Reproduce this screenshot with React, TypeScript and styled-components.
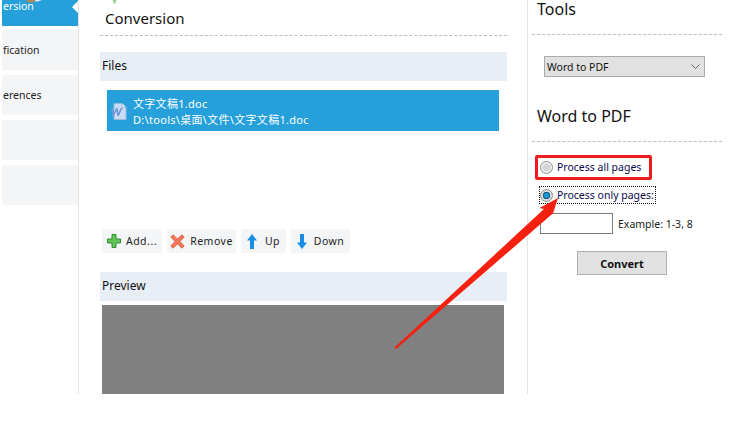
import React from "react";
import styled, { createGlobalStyle } from "styled-components";

const Global = createGlobalStyle`
  html, body { margin: 0; padding: 0; background: #fff; }
  body { font-family: "Noto Sans", "Noto Sans CJK SC", sans-serif; color: #111; }
`;

const Page = styled.div`
  position: relative;
  width: 729px;
  height: 432px;
  overflow: hidden;
  background: #fff;
`;
const Shell = styled.div`
  display: flex;
  height: 394px;
`;
const Sidebar = styled.nav`
  width: 76px;
  padding-left: 2px;
  border-right: 1px solid #e3e3e3;
  display: flex;
  flex-direction: column;
  gap: 5px;
`;
const NavItem = styled.div<{ $active?: boolean }>`
  position: relative;
  height: ${(p) => (p.$active ? 26 : 40)}px;
  margin-bottom: ${(p) => (p.$active ? -1 : 0)}px;
  background: ${(p) => (p.$active ? "#26a0da" : "#f4f5f7")};
  color: ${(p) => (p.$active ? "#fff" : "#222")};
  font-size: 10.5px;
  line-height: ${(p) => (p.$active ? 12 : 40)}px;
  padding-left: 1px;
  white-space: nowrap;
`;
const Notch = styled.i`
  position: absolute;
  right: 0;
  top: 1px;
  border: 6px solid transparent;
  border-right-color: #fff;
  border-left-width: 0;
`;
const Main = styled.main`
  width: 449px;
  padding: 0 20px 0 21px;
  box-sizing: border-box;
  border-right: 1px solid #e3e3e3;
  display: flex;
  flex-direction: column;
`;
const Title = styled.h2<{ $size?: number; $top?: number; $lh?: number }>`
  margin: ${(p) => p.$top ?? 0}px 0 0;
  font-weight: 400;
  font-size: ${(p) => p.$size ?? 15}px;
  line-height: ${(p) => p.$lh ?? 20}px;
  padding-left: 5px;
  color: #111;
`;
const Dash = styled.div<{ $top?: number; $bottom?: number; $w?: number }>`
  border-top: 1px dashed #bdbdbd;
  margin: ${(p) => p.$top ?? 0}px 0 ${(p) => p.$bottom ?? 0}px;
  width: ${(p) => (p.$w ? `${p.$w}px` : "auto")};
`;
const Band = styled.div`
  height: 29px;
  width: 407px;
  line-height: 28px;
  padding-left: 2px;
  box-sizing: border-box;
  background: #e8eef6;
  font-size: 12px;
`;
const FileRow = styled.div`
  margin: 9px 0 0 7px;
  width: 392px;
  height: 41px;
  box-sizing: border-box;
  background: #26a0da;
  color: #fff;
  display: flex;
  align-items: center;
  gap: 6px;
  padding: 2px 0 0 3px;
  font-size: 11px;
  line-height: 16px;
  letter-spacing: 0.3px;
`;
const FileText = styled.div`
  display: flex;
  flex-direction: column;
`;
const Toolbar = styled.div`
  display: flex;
  gap: 5px;
  margin: 98px 0 19px 2px;
`;
const ToolButton = styled.button<{ $w: number; $gap: number }>`
  width: ${(p) => p.$w}px;
  height: 24px;
  border: 0;
  padding: 0;
  background: #f4f5f7;
  display: flex;
  align-items: center;
  justify-content: center;
  gap: ${(p) => p.$gap}px;
  font: inherit;
  font-size: 10.5px;
  color: #222;
  letter-spacing: 0.5px;
`;
const Canvas = styled.div`
  margin: 4px 0 0 2px;
  width: 402px;
  flex: 1;
  background: #808080;
`;
const Aside = styled.aside`
  flex: 1;
  padding-left: 4px;
  display: flex;
  flex-direction: column;
`;
const Select = styled.div`
  margin: 21px 0 0 12px;
  width: 161px;
  height: 21px;
  box-sizing: border-box;
  border: 1px solid #aaa;
  background: #e1e1e1;
  display: flex;
  align-items: center;
  justify-content: space-between;
  padding: 0 4px 0 2px;
  font-size: 10.5px;
  color: #111;
`;
const RadioRow = styled.label<{ $focus?: boolean; $top?: number }>`
  display: flex;
  align-items: center;
  gap: 4px;
  font-size: 10.5px;
  color: #0a0a50;
  width: 115px;
  height: 16px;
  margin: ${(p) => p.$top ?? 0}px 0 0 8px;
  box-sizing: border-box;
  outline: ${(p) => (p.$focus ? "1px dotted #111" : "none")};
`;
const Radio = styled.span<{ $on?: boolean }>`
  width: 13px;
  height: 13px;
  border-radius: 50%;
  box-sizing: border-box;
  flex: none;
  border: 1px solid #8f8f8f;
  background: ${(p) =>
    p.$on
      ? "radial-gradient(circle, #1a9ad6 0 2px, #0c4f80 3.4px, #dcdcdc 4px)"
      : "radial-gradient(circle, #d4d4d4 0 3px, #f2f2f2 5px)"};
`;
const PageRange = styled.div`
  display: flex;
  align-items: center;
  gap: 5px;
  margin: 10px 0 0 8px;
  font-size: 10.5px;
  color: #222;
`;
const PageInput = styled.div`
  width: 73px;
  height: 21px;
  box-sizing: border-box;
  border: 1px solid #7a7a7a;
  background: #fff;
`;
const Convert = styled.button`
  margin: 17px 0 0 45px;
  width: 90px;
  height: 24px;
  box-sizing: border-box;
  border: 1px solid #b0b0b0;
  background: #e1e1e1;
  font: inherit;
  font-size: 11px;
  font-weight: 700;
  color: #111;
`;
const Highlight = styled.div`
  position: absolute;
  left: 535px;
  top: 155px;
  width: 117px;
  height: 25px;
  box-sizing: border-box;
  border: 3px solid #ee1c1c;
  border-radius: 2px;
`;
const Overlay = styled.svg`
  position: absolute;
  left: 0;
  top: 0;
  pointer-events: none;
`;
const Icon = styled.svg`
  flex: none;
  display: block;
`;

const WordIcon = () => (
  <Icon width="17" height="17" viewBox="0 0 17 17">
    <path d="M4 .5h8l4 4v12H4z" fill="#c9dcf4" stroke="#9db8de" />
    <path d="M12 .5v4h4" fill="#eef4fb" stroke="#9db8de" />
    <path d="M1 5l1.200 8h1.600L6.500 8l.8 5h1.600L12.500 5h-1.700l-2.400 5L7.700 5H6.300l-2.500 5L3 5z" fill="#6f96d4" />
  </Icon>
);
const Plus = () => (
  <Icon width="14" height="14" viewBox="0 0 14 14">
    <path d="M5 .5h4v4.500h4.500v4H9v4.500H5V9H.5V5H5z" fill="#63c45a" stroke="#2f8f2f" />
  </Icon>
);
const Cross = () => (
  <Icon width="15" height="15" viewBox="0 0 15 15">
    <path d="M3 .8l4.500 4.200L12 .8l2.200 2.200-4.300 4.500 4.300 4.500-2.200 2.200-4.500-4.300L3 14.200.8 12l4.300-4.500L.8 3z" fill="#f2775a" stroke="#d9512f" strokeWidth=".8" />
  </Icon>
);
const Up = () => (
  <Icon width="10" height="15" viewBox="0 0 10 15">
    <path d="M5 0L10 6.500H7V15H3V6.500H0z" fill="#1a8ee6" />
  </Icon>
);
const Down = () => (
  <Icon width="10" height="15" viewBox="0 0 10 15">
    <path d="M5 15L10 8.500H7V0H3V8.500H0z" fill="#1a8ee6" />
  </Icon>
);

export default function App() {
  return (
    <Page>
      <Global />
      <Shell>
        <Sidebar>
          <NavItem $active>
            ersion
            <Notch />
          </NavItem>
          <NavItem>fication</NavItem>
          <NavItem>erences</NavItem>
          <NavItem />
          <NavItem />
        </Sidebar>
        <Main>
          <Title $top={8}>Conversion</Title>
          <Dash $top={7} $bottom={16} />
          <Band>Files</Band>
          <FileRow>
            <WordIcon />
            <FileText>
              <span>文字文稿1.doc</span>
              <span>D:\tools\桌面\文件\文字文稿1.doc</span>
            </FileText>
          </FileRow>
          <Toolbar>
            <ToolButton $w={60} $gap={5}><Plus />Add...</ToolButton>
            <ToolButton $w={69} $gap={5}><Cross />Remove</ToolButton>
            <ToolButton $w={45} $gap={8}><Up />Up</ToolButton>
            <ToolButton $w={59} $gap={7}><Down />Down</ToolButton>
          </Toolbar>
          <Band>Preview</Band>
          <Canvas />
        </Main>
        <Aside>
          <Title $size={16} $lh={18}>Tools</Title>
          <Dash $top={16} $w={190} />
          <Select>
            Word to PDF
            <svg width="9" height="6" viewBox="0 0 9 6">
              <path d="M.5.5l4 4 4-4" fill="none" stroke="#666" />
            </svg>
          </Select>
          <Title $size={16} $top={29}>Word to PDF</Title>
          <Dash $top={15} $w={190} $bottom={17} />
          <RadioRow><Radio />Process all pages</RadioRow>
          <RadioRow $focus $top={12}><Radio $on />Process only pages:</RadioRow>
          <PageRange><PageInput />Example: 1-3, 8</PageRange>
          <Convert>Convert</Convert>
        </Aside>
      </Shell>
      <Highlight />
      <Overlay width="729" height="432" viewBox="0 0 729 432">
        <path d="M26 0h9l-1.500 2.500h-6z" fill="#a98a5c" />
        <path d="M35 0h7l-4 1.500h-3z" fill="#dfe9ee" />
        <path d="M112 0h5l-1.500 1v2.500h-2V1z" fill="#8fc98a" />
        <path d="M394.500 347.500L544 209L539.500 208L558 198L553 213.500L551 215L396 349Z" fill="#f5200f" />
      </Overlay>
    </Page>
  );
}
